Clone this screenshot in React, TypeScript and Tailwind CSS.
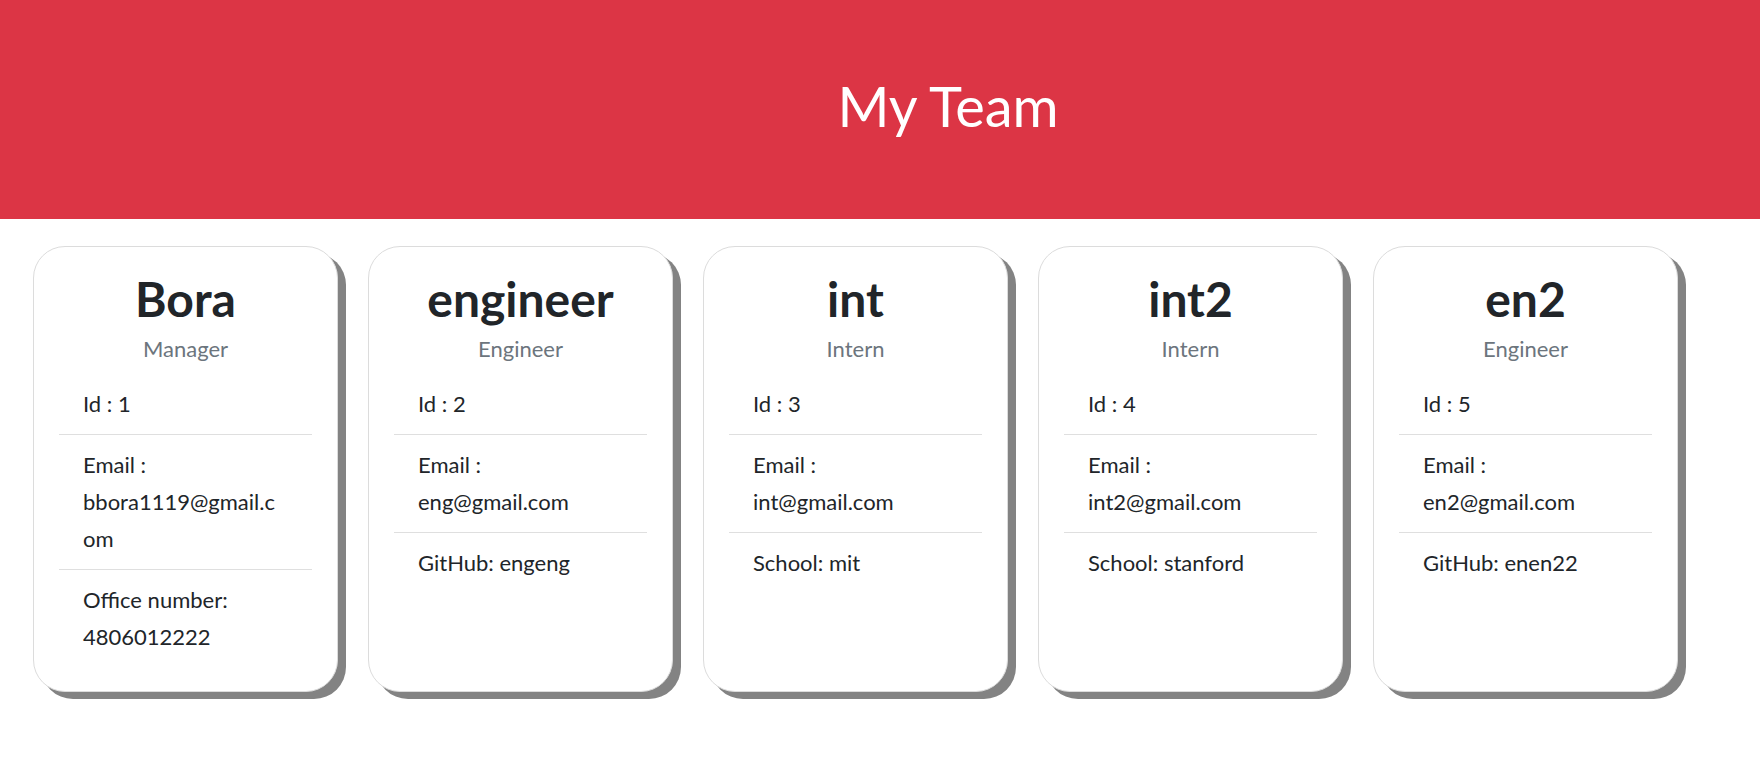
const team = [
  { name: "Bora", role: "Manager", id: 1, email: "bbora1119@gmail.com", extra: "Office number: 4806012222" },
  { name: "engineer", role: "Engineer", id: 2, email: "eng@gmail.com", extra: "GitHub: engeng" },
  { name: "int", role: "Intern", id: 3, email: "int@gmail.com", extra: "School: mit" },
  { name: "int2", role: "Intern", id: 4, email: "int2@gmail.com", extra: "School: stanford" },
  { name: "en2", role: "Engineer", id: 5, email: "en2@gmail.com", extra: "GitHub: enen22" },
];

type Member = (typeof team)[number];

// Tarjeta de cada miembro del equipo
function MemberCard({ member }: { member: Member }) {
  return (
    <div className="w-[305px] h-[446px] bg-white border border-[#dcdcdc] rounded-[32px] shadow-[8px_7px_0_#838383] pt-[23px] px-[25px] flex flex-col">
      <h2 className="text-center text-[48px] leading-[58px] font-bold text-[#212529]">{member.name}</h2>
      <p className="text-center text-[22px] leading-[33px] mt-[4px] text-[#6c757d]">{member.role}</p>
      <ul className="mt-[9px] text-[22px] leading-[37px] text-[#212529]">
        <li className="pl-[24px] pr-[31px] pt-[11px] pb-[12px] border-b border-[#dfdfdf]">Id : {member.id}</li>
        <li className="pl-[24px] pr-[31px] pt-[11px] pb-[12px] border-b border-[#dfdfdf] break-all">
          Email :<br />
          {member.email}
        </li>
        <li className="pl-[24px] pr-[31px] pt-[11px] pb-[12px]">{member.extra}</li>
      </ul>
    </div>
  );
}

export default function App() {
  return (
    <div className="min-h-screen bg-white font-[Lato,sans-serif]">
      <header className="h-[219px] bg-[#dc3545] flex justify-center pl-[136px] pt-[73px]">
        <h1 className="text-white text-[56px] leading-[66px]">My Team</h1>
      </header>
      <main className="flex gap-[30px] pl-[33px] mt-[27px]">
        {team.map((m) => (
          <MemberCard key={m.id} member={m} />
        ))}
      </main>
    </div>
  );
}
